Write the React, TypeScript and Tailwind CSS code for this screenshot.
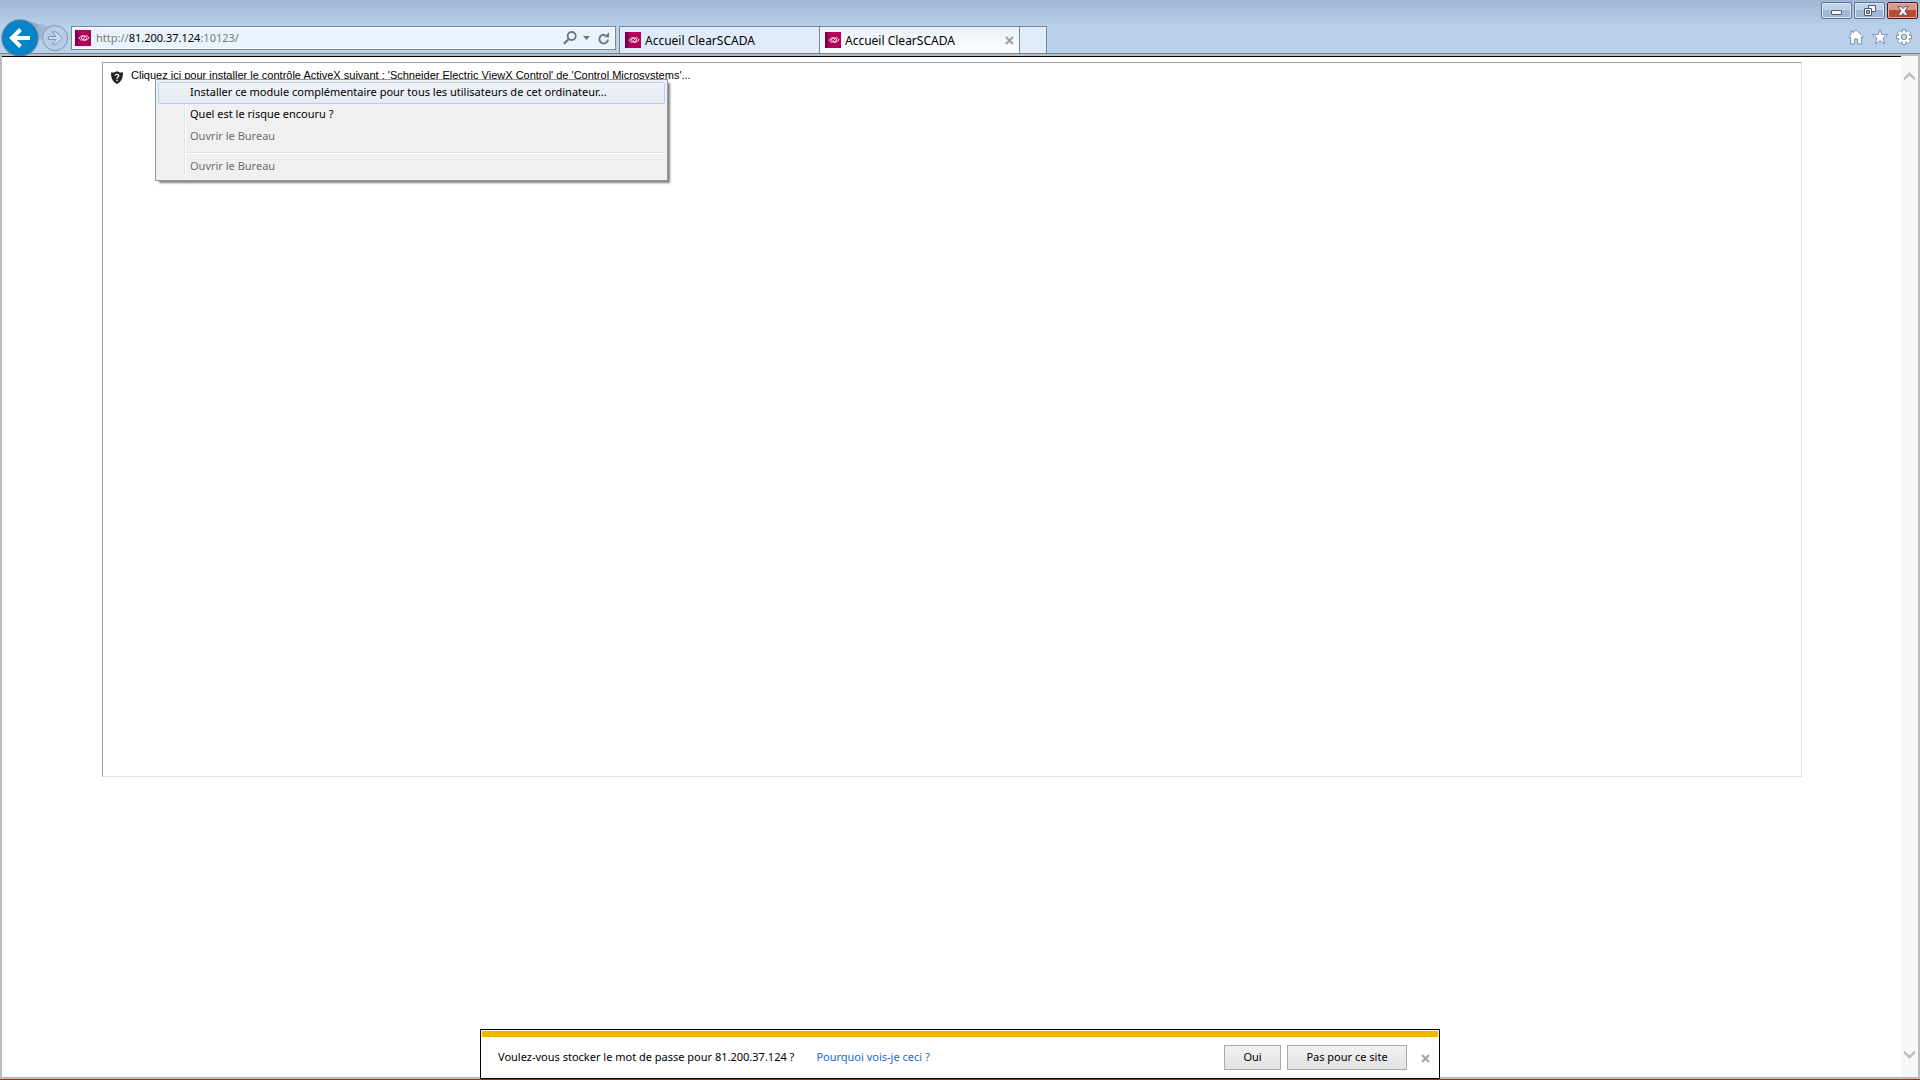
import { useState } from "react";

const TABS = [
  { id: 1, title: "Accueil ClearSCADA" },
  { id: 2, title: "Accueil ClearSCADA" },
];

function Favicon() {
  return (
    <svg viewBox="0 0 16 16" className="size-4 flex-none" aria-hidden="true">
      <rect width="16" height="16" fill="#b0005a" />
      <rect width="3" height="16" fill="#7c0052" />
      <g fill="none" stroke="#fff" strokeWidth="0.9">
        <path d="M4.200 8.200C5.600 5.800 8.400 5 10.400 6.200c1.500 1 1.400 3-.2 3.600-1.300.4-2.300-.6-1.700-1.700" />
        <path d="M13.900 7.800C12.500 10.200 9.600 11 7.600 9.800c-1.500-1-1.400-3 .2-3.600 1.300-.4 2.300.6 1.700 1.700" />
        <path d="M10.800 5.600c1.500.2 2.500 1 3.100 2.200M4.200 8.200c.6 1.200 1.600 2 3.100 2.200" />
      </g>
    </svg>
  );
}

function CrossIcon() {
  return (
    <svg viewBox="0 0 9 9" className="size-[9px]" aria-hidden="true">
      <path d="M1 1l7 7M8 1L1 8" stroke="#a3a3a3" strokeWidth="2.200" fill="none" />
    </svg>
  );
}

function NavButtons() {
  return (
    <div className="relative flex h-10 w-[71px] flex-none overflow-hidden">
      <svg viewBox="0 0 71 40" className="absolute inset-0 h-10 w-[71px]" aria-hidden="true">
        <defs>
          <linearGradient id="swoosh" x1="0" y1="0" x2="1" y2="0">
            <stop offset="0.300" stopColor="#8fa6c0" />
            <stop offset="1" stopColor="#b4cbe5" />
          </linearGradient>
        </defs>
        <path d="M22 4C32 5 36 9 54 9.500L40 24z" fill="url(#swoosh)" />
        <circle cx="20" cy="22" r="18.200" fill="#0585c7" stroke="#68839f" strokeWidth="1" />
        <path d="M30 22H12M20.500 13.500L12 22l8.500 8.500" fill="none" stroke="#fff" strokeWidth="4" />
        <circle cx="55" cy="22" r="12.500" fill="#b6cde7" stroke="#8097b1" strokeWidth="1" />
        <path
          d="M48.500 20.500h7.500l-4-4.700h4l6.500 6.200-6.500 6.200h-4l4-4.700h-7.500z"
          fill="#c8daee"
          stroke="#8097b1"
          strokeWidth="1"
        />
      </svg>
      <button type="button" aria-label="Précédent" className="relative h-10 w-10" />
      <button type="button" aria-label="Suivant" className="relative h-10 flex-1" />
    </div>
  );
}

function AddressBar() {
  return (
    <div className="mt-2.5 flex h-6 w-[545px] items-center border border-[#74879e] bg-[#eaf2fb] pr-1 pl-[3px] ring-1 ring-white ring-inset">
      <Favicon />
      <a href="#" className="ml-[5px] flex-1 text-[11px] leading-4 text-[#7a7a7a]">
        http://<span className="text-black">81.200.37.124</span>:10123/
      </a>
      <button type="button" aria-label="Rechercher" className="mr-1.5">
        <svg viewBox="0 0 14 14" className="size-3.5">
          <circle cx="8.700" cy="5" r="4" fill="none" stroke="#6f7377" strokeWidth="1.800" />
          <path d="M5.700 8L1 12.700" stroke="#6f7377" strokeWidth="2.200" />
        </svg>
      </button>
      <button type="button" aria-label="Afficher la liste" className="mr-2">
        <svg viewBox="0 0 7 4" className="h-1 w-[7px]">
          <path d="M0 0h7L3.500 4z" fill="#6f7377" />
        </svg>
      </button>
      <button type="button" aria-label="Actualiser" className="mr-px">
        <svg viewBox="0 0 12 13" className="h-[13px] w-3">
          <path d="M7.500 3.200A4.300 4.300 0 1 0 10 7.500" fill="none" stroke="#6f7377" strokeWidth="1.900" />
          <path d="M6 5.200h5V.3z" fill="#6f7377" />
        </svg>
      </button>
    </div>
  );
}

function WindowButtons() {
  const base =
    "flex h-[17px] w-[31px] items-center justify-center rounded-[2px] border ring-1 ring-inset";
  const glass =
    "border-[#5f7590] bg-linear-to-b from-[#bfd2e8] from-50% to-[#9fb8d4] to-50% ring-[#d5e3f2]";
  return (
    <div className="flex gap-0.5 pt-0.5 pr-0.5">
      <button type="button" aria-label="Réduire" className={`${base} ${glass}`}>
        <svg viewBox="0 0 11 5" className="mt-1 h-[5px] w-[11px]">
          <rect x="0.500" y="0.500" width="10" height="4" rx="0.500" fill="#f4f4f4" stroke="#555a68" />
        </svg>
      </button>
      <button type="button" aria-label="Restaurer" className={`${base} ${glass}`}>
        <svg viewBox="0 0 12 11" className="h-[11px] w-3">
          <path d="M4.500.5h7v6h-7z" fill="#f4f4f4" stroke="#555a68" />
          <path d="M.5 3.500h7v7h-7z" fill="#f4f4f4" stroke="#555a68" />
          <path d="M2.500 5.500h3v3h-3z" fill="#a9bfd8" stroke="#555a68" />
        </svg>
      </button>
      <button
        type="button"
        aria-label="Fermer"
        className={`${base} border-[#4d1521] bg-linear-to-b from-[#dd9a8c] from-50% to-[#bd4a33] to-50% ring-[#e6b0a4]`}
      >
        <svg viewBox="0 0 12 10" className="h-2.5 w-3">
          <path
            d="M.8.600h3.400L6 2.600 7.800.600h3.400L8 5l3.200 4.400H7.800L6 7.400 4.200 9.400H.8L4 5z"
            fill="#f4f4f4"
            stroke="#555a68"
          />
        </svg>
      </button>
    </div>
  );
}

function ToolIcons() {
  return (
    <div className="flex gap-2 pt-2.5 pr-2">
      <button type="button" aria-label="Accueil">
        <svg viewBox="0 0 16 16" className="size-4">
          <path
            d="M8 .8L15.500 8l-1 1-1.200-1v7H9.700v-5H6.400v5H2.800V8L1.500 9l-1-1L3 5.600V2h2v1.700z"
            fill="#fff"
            stroke="#7288a2"
            strokeWidth="0.900"
          />
        </svg>
      </button>
      <button type="button" aria-label="Favoris">
        <svg viewBox="0 0 16 16" className="size-4">
          <path
            d="M8 .6l1.900 5h5.500l-4.400 3.500 1.700 5.900L8 11.600 3.300 15 5 9.100.600 5.600h5.500z"
            fill="#fff"
            stroke="#7288a2"
            strokeWidth="0.900"
          />
        </svg>
      </button>
      <button type="button" aria-label="Outils">
        <svg viewBox="0 0 16 16" className="size-4">
          <g fill="#fff" stroke="#7288a2" strokeWidth="0.900">
            {[0, 45, 90, 135].map((a) => (
              <rect key={a} x="6.300" y="0.500" width="3.400" height="15" transform={`rotate(${a} 8 8)`} />
            ))}
            <circle cx="8" cy="8" r="5.600" />
          </g>
          {[0, 45, 90, 135].map((a) => (
            <rect key={a} x="6.800" y="1" width="2.400" height="14" fill="#fff" transform={`rotate(${a} 8 8)`} />
          ))}
          <circle cx="8" cy="8" r="2.800" fill="#b9d0ea" stroke="#7288a2" strokeWidth="0.900" />
        </svg>
      </button>
    </div>
  );
}

function BrowserBar({ active, onSelect }: { active: number; onSelect: (id: number) => void }) {
  return (
    <header className="flex h-[54px] flex-none items-start justify-between border-b border-[#6f8299] bg-linear-to-b from-[#9db7d3] to-[#b9d0ea] to-50%">
      <nav className="flex items-start pt-[14px]">
        <div className="mt-0.5 -mb-1 flex">
          <NavButtons />
          <AddressBar />
        </div>
        <div className="mt-3 ml-[3px] flex h-[27px] border-t border-l border-[#74879e]">
          {TABS.map((t) => (
            <div
              key={t.id}
              className={`flex w-[200px] items-center border-r border-[#74879e] pr-[5px] pl-[5px] ${
                active === t.id ? "bg-linear-to-b from-[#e9f0f8] to-white" : "bg-[#e0ecf9]"
              }`}
            >
              <button
                type="button"
                onClick={() => onSelect(t.id)}
                className="flex flex-1 items-end gap-1 text-left text-[12px] leading-[14px] text-black"
              >
                <Favicon />
                {t.title}
              </button>
              {active === t.id && (
                <button type="button" aria-label="Fermer l'onglet">
                  <CrossIcon />
                </button>
              )}
            </div>
          ))}
          <button
            type="button"
            aria-label="Nouvel onglet"
            className="w-[27px] border-r border-[#74879e] bg-[#e0ecf9]"
          />
        </div>
      </nav>
      <div className="flex flex-col items-end">
        <WindowButtons />
        <ToolIcons />
      </div>
    </header>
  );
}

function ContextMenu() {
  const item = "block h-[22px] w-full rounded-[2px] border pb-0.5 pl-[31px] text-left text-[11px] leading-4";
  return (
    <div
      role="menu"
      className="absolute top-4 left-[52px] w-[513px] border border-[#979797] bg-[#f0f0f0] p-0.5 shadow-[3px_3px_2px_-1px_#808080]"
    >
      <div className="absolute top-0.5 bottom-0.5 left-7 w-0.5 border-l border-[#e2e3e3] bg-white" />
      <div className="relative">
        <button
          type="button"
          role="menuitem"
          className={`${item} border-[#aecff7] bg-linear-to-b from-[#eff3f9]/80 to-[#e2e9f4]/80 text-black`}
        >
          Installer ce module complémentaire pour tous les utilisateurs de cet ordinateur...
        </button>
        <button type="button" role="menuitem" className={`${item} border-transparent text-black`}>
          Quel est le risque encouru ?
        </button>
        <button type="button" role="menuitem" disabled className={`${item} border-transparent text-[#6d6d6d]`}>
          Ouvrir le Bureau
        </button>
        <div className="mt-1 mb-0.5 ml-7 h-0.5 border-t border-[#e0e0e0] bg-white" />
        <button type="button" role="menuitem" disabled className={`${item} border-transparent text-[#6d6d6d]`}>
          Ouvrir le Bureau
        </button>
      </div>
    </div>
  );
}

function ShieldIcon() {
  return (
    <svg viewBox="0 0 12 13" className="h-[13px] w-3 flex-none" aria-hidden="true">
      <path d="M6 0c1.500 1.200 3.500 1.800 6 1.500 0 5.500-1.500 9-6 11.500C1.500 10.500 0 7 0 1.500 2.500 1.800 4.500 1.200 6 0z" fill="#222" />
      <path d="M4.200 4.600C4.300 2.900 7.900 2.900 7.800 4.800 7.700 6.100 6 6 6 7.700" fill="none" stroke="#fff" strokeWidth="1.300" />
      <rect x="5.300" y="8.700" width="1.400" height="1.400" fill="#fff" />
    </svg>
  );
}

function ScrollBar() {
  return (
    <div className="flex w-[17px] flex-none flex-col items-center justify-between bg-[#f8f8f8] pt-4 pb-[18px]">
      <button type="button" aria-label="Haut">
        <svg viewBox="0 0 11 9" className="h-[9px] w-[11px]">
          <path d="M0 8.500V5.500L5.500 0 11 5.500v3L5.500 3.800z" fill="#bdbdbd" />
        </svg>
      </button>
      <button type="button" aria-label="Bas">
        <svg viewBox="0 0 11 9" className="h-[9px] w-[11px]">
          <path d="M0 .5v3L5.500 9 11 3.500v-3L5.500 5.200z" fill="#bdbdbd" />
        </svg>
      </button>
    </div>
  );
}

function PasswordPrompt({ onClose }: { onClose: () => void }) {
  const button =
    "h-[25px] border border-[#a9a9a9] bg-linear-to-b from-[#f2f2f2] to-[#e2e2e2] text-[11px] leading-4 text-black";
  return (
    <div className="absolute bottom-0 left-1/2 w-1/2 -translate-x-1/2 border border-black bg-white p-px">
      <div className="h-1.5 bg-[#f5b000]" />
      <div className="flex h-10 items-center pr-2 pl-4 text-[11px] leading-4">
        <span className="text-black">Voulez-vous stocker le mot de passe pour 81.200.37.124 ?</span>
        <a href="#" className="ml-[22px] flex-1 text-[#1a66d6]">
          Pourquoi vois-je ceci ?
        </a>
        <button type="button" className={`${button} w-[57px]`}>
          Oui
        </button>
        <button type="button" className={`${button} ml-1.5 w-[120px]`}>
          Pas pour ce site
        </button>
        <button type="button" aria-label="Fermer" onClick={onClose} className="ml-3.5 pt-0.5">
          <CrossIcon />
        </button>
      </div>
    </div>
  );
}

export default function App() {
  const [active, setActive] = useState(2);
  const [prompt, setPrompt] = useState(true);

  return (
    <div className="relative flex h-screen flex-col overflow-hidden border-b border-[#d01818] bg-white font-['Noto_Sans',sans-serif]">
      <BrowserBar active={active} onSelect={setActive} />

      <div className="flex min-h-0 flex-1 border-2 border-[#bcbcbc]">
        <main className="min-w-0 flex-1 border-t border-black pt-[5px]">
          <section className="relative mr-[99px] ml-[100px] h-[715px] border border-t-[#a0a0a0] border-r-[#e3e3e3] border-b-[#e3e3e3] border-l-[#a0a0a0]">
            <div className="flex gap-2 pt-1 pl-2">
              <div className="pt-1">
                <ShieldIcon />
              </div>
              <a href="#" className="font-['Liberation_Sans',sans-serif] text-[11px] leading-4 text-black">
                Cliquez ici pour installer le contrôle ActiveX suivant : 'Schneider Electric ViewX Control' de
                'Control Microsystems'...
              </a>
            </div>
            <ContextMenu />
          </section>
        </main>
        <ScrollBar />
      </div>

      {prompt && <PasswordPrompt onClose={() => setPrompt(false)} />}
    </div>
  );
}
